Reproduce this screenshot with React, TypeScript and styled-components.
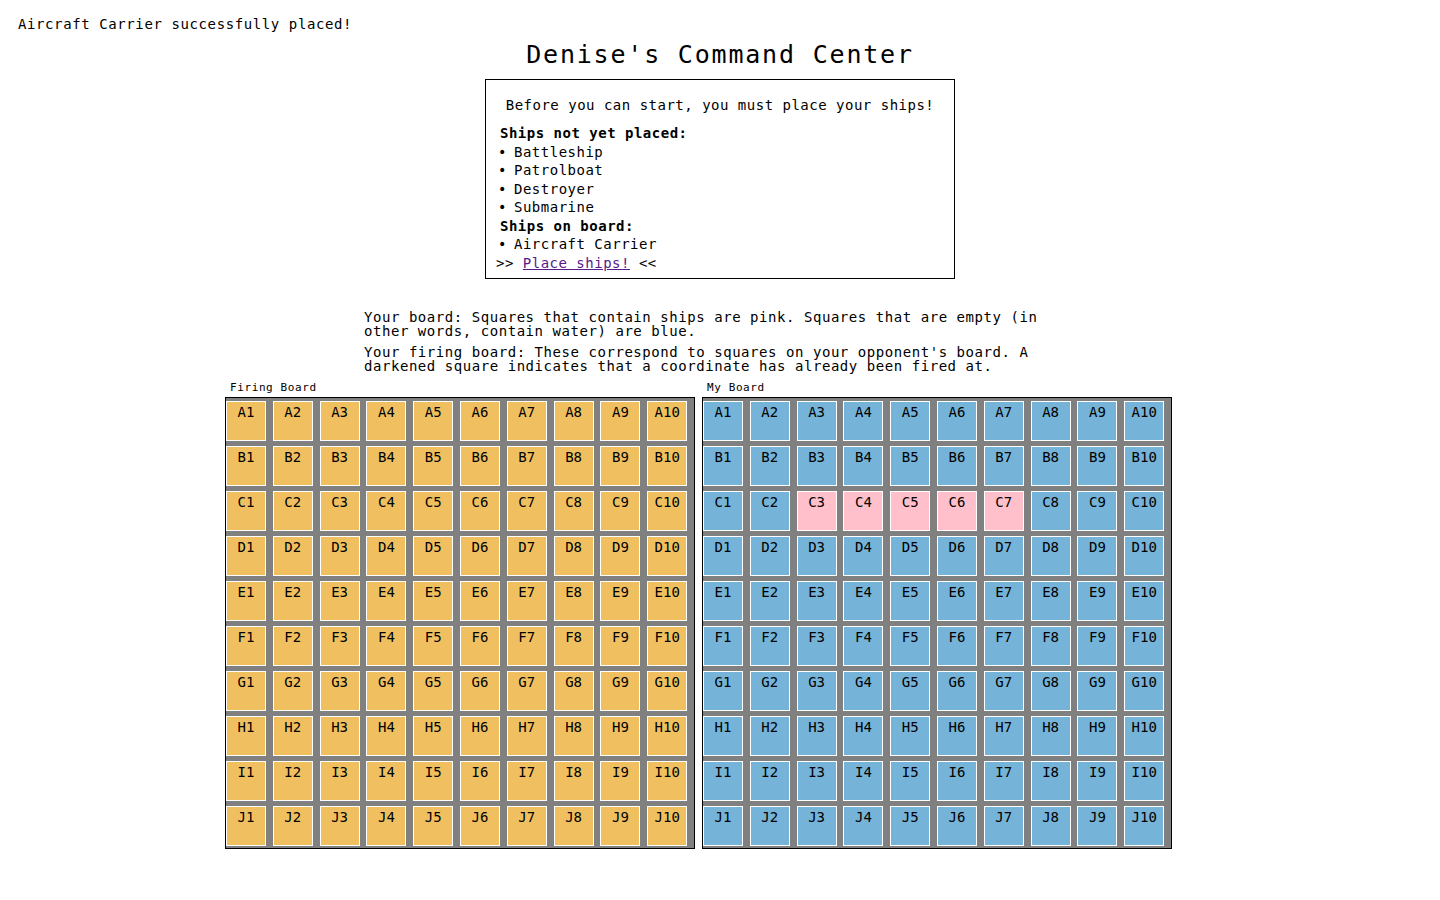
import React from "react";
import styled, { createGlobalStyle } from "styled-components";

const GlobalStyle = createGlobalStyle`
  html, body {
    margin: 0;
    padding: 0;
    background: #ffffff;
    color: #000000;
    font-family: "DejaVu Sans Mono", Menlo, monospace;
  }
  * { box-sizing: border-box; }
`;

const Page = styled.div`
  width: 1440px;
  min-height: 900px;
  display: flex;
  flex-direction: column;
`;

const Status = styled.div`
  padding: 16px 0 0 18px;
  font-size: 14px;
  line-height: 16px;
  letter-spacing: 0.6px;
`;

const Title = styled.h1`
  margin: 9px 0 0 0;
  text-align: center;
  font-size: 25px;
  line-height: 28px;
  font-weight: normal;
  letter-spacing: 1.8px;
`;

const SetupBox = styled.div`
  align-self: center;
  width: 470px;
  margin-top: 10px;
  border: 1px solid #000;
  padding: 16px 10px 6px 10px;
  font-size: 14px;
  line-height: 18.5px;
  letter-spacing: 0.5px;
`;

const Intro = styled.p`
  margin: 0 0 9.5px 0;
  text-align: center;
`;

const Section = styled.div`
  padding-left: 4px;
`;

const SectionTitle = styled.div`
  font-weight: bold;
`;

const Item = styled.div`
  margin-left: -2px;
`;

const Bullet = styled.span`
  display: inline-block;
  width: 16px;
  letter-spacing: 0;
`;

const LinkLine = styled.div``;

const Link = styled.a`
  color: #551a8b;
  text-decoration: underline;
`;

const Notes = styled.div`
  margin: 31px 0 0 364px;
  width: 700px;
  display: flex;
  flex-direction: column;
  gap: 7px;
  font-size: 14px;
  line-height: 14px;
  letter-spacing: 0.55px;
`;

const Note = styled.p`
  margin: 0;
`;

const Boards = styled.div`
  display: flex;
  gap: 7px;
  padding-left: 225px;
  margin-top: 7.5px;
`;

const BoardBlock = styled.div`
  display: flex;
  flex-direction: column;
  gap: 3.5px;
`;

const BoardLabel = styled.div`
  padding-left: 5px;
  font-size: 11px;
  line-height: 13px;
  letter-spacing: 0.6px;
`;

const Grid = styled.div`
  width: 470px;
  height: 452px;
  border: 1px solid #000;
  background: #808080;
  display: grid;
  grid-template-columns: repeat(10, 1fr);
  grid-template-rows: repeat(10, 45px);
  align-items: center;
  justify-items: start;
`;

type Tone = "fire" | "water" | "ship";

const toneColor: Record<Tone, string> = {
  fire: "#f0c060",
  water: "#75b3d8",
  ship: "#ffc0cb",
};

const Cell = styled.div<{ $tone: Tone }>`
  width: 40px;
  height: 40px;
  border: 1px solid #ffffff;
  background: ${(p) => toneColor[p.$tone]};
  padding-top: 2.5px;
  text-align: center;
  font-size: 14px;
  line-height: 16px;
`;

const rows = ["A", "B", "C", "D", "E", "F", "G", "H", "I", "J"];
const cols = [1, 2, 3, 4, 5, 6, 7, 8, 9, 10];
const shipCells = new Set(["C3", "C4", "C5", "C6", "C7"]);

function Board({ mine }: { mine: boolean }) {
  return (
    <Grid>
      {rows.map((r) =>
        cols.map((c) => {
          const id = `${r}${c}`;
          const tone: Tone = mine ? (shipCells.has(id) ? "ship" : "water") : "fire";
          return (
            <Cell key={id} $tone={tone}>
              {id}
            </Cell>
          );
        })
      )}
    </Grid>
  );
}

function ShipItem({ name }: { name: string }) {
  return (
    <Item>
      <Bullet>•</Bullet>
      {name}
    </Item>
  );
}

export default function App() {
  return (
    <>
      <GlobalStyle />
      <Page>
        <Status>Aircraft Carrier successfully placed!</Status>
        <Title>Denise's Command Center</Title>
        <SetupBox>
          <Intro>Before you can start, you must place your ships!</Intro>
          <Section>
            <SectionTitle>Ships not yet placed:</SectionTitle>
            <ShipItem name="Battleship" />
            <ShipItem name="Patrolboat" />
            <ShipItem name="Destroyer" />
            <ShipItem name="Submarine" />
            <SectionTitle>Ships on board:</SectionTitle>
            <ShipItem name="Aircraft Carrier" />
          </Section>
          <LinkLine>
            &gt;&gt; <Link href="#">Place ships!</Link> &lt;&lt;
          </LinkLine>
        </SetupBox>
        <Notes>
          <Note>
            Your board: Squares that contain ships are pink. Squares that are empty (in other words, contain water) are blue.
          </Note>
          <Note>
            Your firing board: These correspond to squares on your opponent's board. A darkened square indicates that a coordinate has already been fired at.
          </Note>
        </Notes>
        <Boards>
          <BoardBlock>
            <BoardLabel>Firing Board</BoardLabel>
            <Board mine={false} />
          </BoardBlock>
          <BoardBlock>
            <BoardLabel>My Board</BoardLabel>
            <Board mine={true} />
          </BoardBlock>
        </Boards>
      </Page>
    </>
  );
}
